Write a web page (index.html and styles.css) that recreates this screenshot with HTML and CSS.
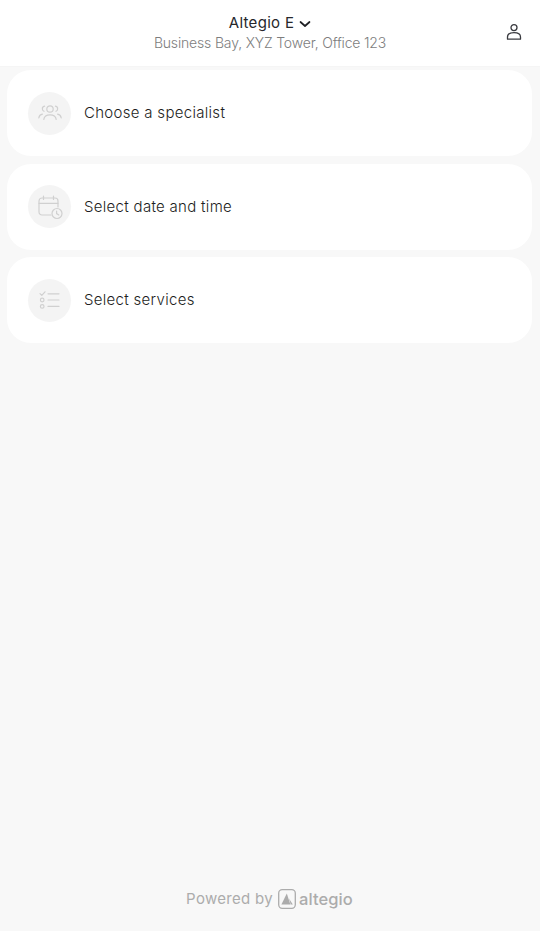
FILE: index.html
```html
<!DOCTYPE html>
<html lang="en">
<head>
    <meta charset="UTF-8">
    <meta name="viewport" content="width=device-width, initial-scale=1.0">
    <title>Altegio E</title>
    <link rel="stylesheet" href="styles.css">
</head>
<body>
    <div class="page">
        <header class="top">
            <div class="branch">
                <div class="branch-name">
                    <span>Altegio E</span>
                    <svg class="chevron" width="12" height="8" viewBox="0 0 12 8" fill="none">
                        <path d="M1.5 2 L6 6 L10.5 2" stroke="#1f2024" stroke-width="1.7" stroke-linecap="round" stroke-linejoin="round"/>
                    </svg>
                </div>
                <div class="branch-address">Business Bay, XYZ Tower, Office 123</div>
            </div>
            <svg class="user" width="18" height="18" viewBox="0 0 18 18" fill="none">
                <circle cx="9" cy="4.6" r="3" stroke="#3a3b40" stroke-width="1.3"/>
                <path d="M2.5 16.2 V14 C2.5 11.2 5.2 9.6 9 9.6 C12.8 9.6 15.5 11.2 15.5 14 V16.2 Z" stroke="#3a3b40" stroke-width="1.3" stroke-linejoin="round"/>
            </svg>
        </header>

        <main class="steps">
            <div class="step">
                <div class="step-icon">
                    <svg width="24" height="24" viewBox="0 0 24 24" fill="none" stroke="#d0d0d0" stroke-width="1.2" stroke-linecap="round">
                        <circle cx="12" cy="8" r="3.2"/>
                        <path d="M5.8 18.4 C6.2 15.2 8.6 13.8 12 13.8 C15.4 13.8 17.8 15.2 18.2 18.4"/>
                        <path d="M6.6 5.2 C5 5.6 4.2 6.8 4.4 8.2 C4.5 9.2 5.2 10 6 10.3"/>
                        <path d="M17.4 5.2 C19 5.6 19.8 6.8 19.6 8.2 C19.5 9.2 18.8 10 18 10.3"/>
                        <path d="M0.8 16.8 C1.2 14.8 2.4 13.6 4.4 13.2"/>
                        <path d="M23.2 16.8 C22.8 14.8 21.6 13.6 19.6 13.2"/>
                    </svg>
                </div>
                <div class="step-title">Choose a specialist</div>
            </div>
            <div class="step">
                <div class="step-icon">
                    <svg width="26" height="26" viewBox="0 0 26 26" fill="none" stroke="#d0d0d0" stroke-width="1.2" stroke-linecap="round">
                        <path d="M14 21 H5 C3.2 21 2 19.8 2 18 V7 C2 5.2 3.2 4 5 4 H18 C19.8 4 21 5.2 21 7 V13"/>
                        <path d="M2 9.4 H21"/>
                        <path d="M6.5 2 V5.5"/>
                        <path d="M16.5 2 V5.5"/>
                        <circle cx="20" cy="19.5" r="5"/>
                        <path d="M19.6 17 V19.6 L21.8 21"/>
                    </svg>
                </div>
                <div class="step-title">Select date and time</div>
            </div>
            <div class="step">
                <div class="step-icon">
                    <svg width="24" height="24" viewBox="0 0 24 24" fill="none" stroke="#d0d0d0" stroke-width="1.2" stroke-linecap="round" stroke-linejoin="round">
                        <path d="M2 5.6 L3.8 7.4 L7 3.8"/>
                        <circle cx="4.2" cy="12" r="1.8"/>
                        <circle cx="4.2" cy="18.4" r="1.8"/>
                        <path d="M10 5.8 H21"/>
                        <path d="M10 12 H21"/>
                        <path d="M10 18.4 H21"/>
                    </svg>
                </div>
                <div class="step-title">Select services</div>
            </div>
        </main>

        <footer class="powered">
            <span>Powered by</span>
            <svg class="logo" width="18" height="20" viewBox="0 0 18 20" fill="none">
                <rect x="0.7" y="0.7" width="16.6" height="18.6" rx="3.5" stroke="#acacac" stroke-width="1.3"/>
                <path d="M3.4 15.6 L8.8 4.5 L12.4 15.6 Z" fill="#acacac"/>
                <path d="M11 9.5 L14.8 15.6 H12.7 Z" fill="#acacac"/>
            </svg>
            <span class="logo-text">altegio</span>
        </footer>
    </div>
</body>
</html>
```

FILE: styles.css
```css
*{
    box-sizing: border-box;
}
body{
    margin: 0;
    background-color: #f8f8f8;
    font-family: "Inter", "Liberation Sans", sans-serif;
    font-weight: 300;
    color: #1d1e22;
}
.page{
    display: flex;
    flex-direction: column;
    height: 931px;
}
.top{
    position: relative;
    height: 67px;
    flex-shrink: 0;
    display: flex;
    justify-content: center;
    padding-top: 13px;
    background-color: #fff;
    border-bottom: 1px solid #f5f5f5;
}
.branch{
    text-align: center;
}
.branch-name{
    display: flex;
    align-items: center;
    justify-content: center;
    gap: 5px;
    font-size: 15px;
    font-weight: 400;
    line-height: 19px;
    letter-spacing: 0.3px;
    color: #26272b;
}
.chevron{
    margin-top: 2px;
}
.branch-address{
    margin-top: 1px;
    font-size: 14px;
    line-height: 19px;
    letter-spacing: -0.17px;
    color: #7d7d7d;
}
.user{
    position: absolute;
    top: 23px;
    right: 17px;
}
.steps{
    display: flex;
    flex-direction: column;
    gap: 7.5px;
    padding: 3px 8px 0 7px;
}
.step{
    display: flex;
    align-items: center;
    gap: 13px;
    height: 86px;
    padding-left: 21px;
    background-color: #fff;
    border-radius: 24px;
}
.step-icon{
    width: 43px;
    height: 43px;
    border-radius: 50%;
    background-color: #f4f4f4;
    display: flex;
    align-items: center;
    justify-content: center;
}
.step-title{
    font-size: 15px;
    line-height: 20px;
    letter-spacing: 0.3px;
}
.powered{
    margin-top: auto;
    margin-bottom: 22px;
    padding-right: 1px;
    display: flex;
    align-items: center;
    justify-content: center;
    gap: 5px;
    font-size: 15px;
    font-weight: 400;
    line-height: 20px;
    letter-spacing: 0.3px;
    color: #acacac;
}
.logo-text{
    margin-left: -2px;
    font-size: 16.5px;
    font-weight: 500;
    letter-spacing: 0.1px;
}
```
